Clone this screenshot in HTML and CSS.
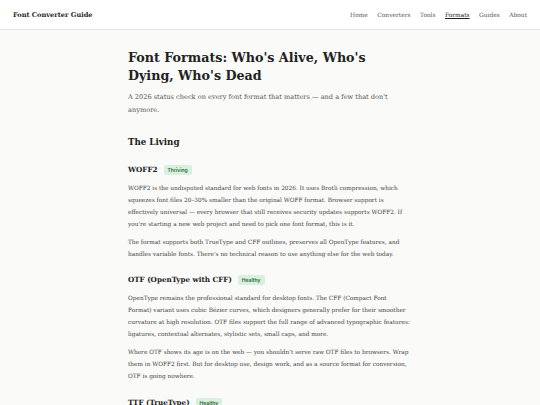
FILE: index.html
```html
<!DOCTYPE html>
<html lang="en">
<head>
  <meta charset="UTF-8">
  <title>Font Formats: Who's Alive, Who's Dying, Who's Dead</title>
  <meta name="viewport" content="width=device-width, initial-scale=1.0">
  <link rel="stylesheet" href="styles.css">
</head>
<body>
  <header class="site-header">
    <a class="logo" href="#">Font Converter Guide</a>
    <nav class="nav">
      <a href="#">Home</a>
      <a href="#">Converters</a>
      <a href="#">Tools</a>
      <a href="#" class="active">Formats</a>
      <a href="#">Guides</a>
      <a href="#">About</a>
    </nav>
  </header>
  <main class="article">
    <h1 class="title">Font Formats: Who's Alive, Who's Dying, Who's Dead</h1>
    <p class="lead">A 2026 status check on every font format that matters — and a few that don't anymore.</p>

    <h2 class="section">The Living</h2>

    <h3 class="format">WOFF2 <span class="badge">Thriving</span></h3>
    <p>WOFF2 is the undisputed standard for web fonts in 2026. It uses Brotli compression, which squeezes font files 20–30% smaller than the original WOFF format. Browser support is effectively universal — every browser that still receives security updates supports WOFF2. If you're starting a new web project and need to pick one font format, this is it.</p>
    <p>The format supports both TrueType and CFF outlines, preserves all OpenType features, and handles variable fonts. There's no technical reason to use anything else for the web today.</p>

    <h3 class="format">OTF (OpenType with CFF) <span class="badge">Healthy</span></h3>
    <p>OpenType remains the professional standard for desktop fonts. The CFF (Compact Font Format) variant uses cubic Bézier curves, which designers generally prefer for their smoother curvature at high resolution. OTF files support the full range of advanced typographic features: ligatures, contextual alternates, stylistic sets, small caps, and more.</p>
    <p>Where OTF shows its age is on the web — you shouldn't serve raw OTF files to browsers. Wrap them in WOFF2 first. But for desktop use, design work, and as a source format for conversion, OTF is going nowhere.</p>

    <h3 class="format">TTF (TrueType) <span class="badge">Healthy</span></h3>
    <p>TrueType was developed by Apple in the late 1980s and licensed to Microsoft. It uses quadratic curves and has excellent hinting support, which makes it render crisply on low-resolution screens.</p>
  </main>
</body>
</html>
```

FILE: styles.css
```css
body { margin: 0; background: #fafaf8; color: #444; font-family: 'DejaVu Serif', Georgia, serif; }
a { color: inherit; text-decoration: none; }

.site-header { background: #fff; border-bottom: 1px solid #e6e6e3; height: 29px; padding: 0 13px; display: flex; align-items: center; justify-content: space-between; }
.logo { font-size: 6.6px; font-weight: 700; color: #1f1f1f; }
.nav { display: flex; gap: 9.5px; font-size: 5.9px; color: #555; }
.nav a.active { color: #222; text-decoration: underline; }

.article { max-width: 284px; margin: 0 auto; padding-top: 19px; }
.article p { font-size: 5.8px; line-height: 11.9px; margin: 0 0 6px; }
.title { font-size: 12.7px; line-height: 18px; font-weight: 700; color: #222; margin: 0 0 6px; }
.article .lead { font-size: 6.6px; line-height: 13px; color: #555; margin: 0 0 18px; }
.section { font-size: 8.7px; line-height: 14px; font-weight: 700; color: #222; margin: 0 0 15px; }
.format { display: flex; align-items: center; gap: 6px; font-size: 7.2px; line-height: 12px; font-weight: 700; color: #222; margin: 14px 0 7px; }
.section + .format { margin-top: 0; }
.badge { font-family: Inter, 'Noto Sans', sans-serif; font-size: 5px; font-weight: 600; line-height: 10px; padding: 0 4px; background: #daf0de; color: #2a6636; border-radius: 2px; }
```
